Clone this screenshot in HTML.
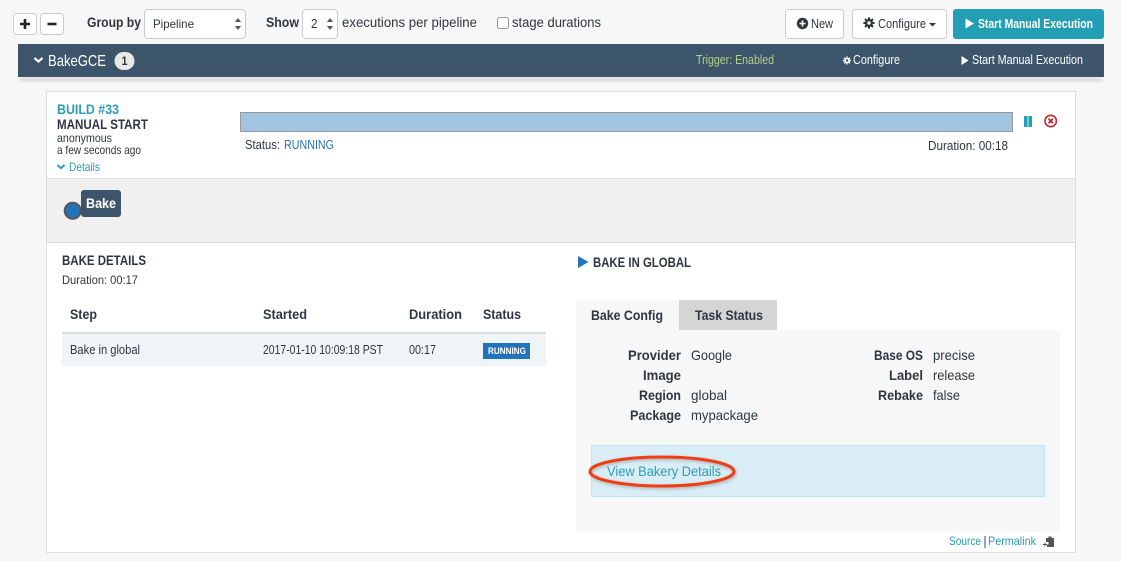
<!DOCTYPE html>
<html><head><meta charset="utf-8"><title>BakeGCE</title>
<style>
html,body{margin:0;padding:0;width:1121px;height:561px;overflow:hidden;background:#f7f7f7}
svg{display:block}
text{font-family:"Liberation Sans",sans-serif;font-size:14px;fill:#2f3640}
.b{font-weight:bold}
.s{font-size:13px}
.xs{font-size:12px}
.l{fill:#2b9cb3}
</style></head><body>
<svg width="1121" height="561" viewBox="0 0 1121 561" xmlns="http://www.w3.org/2000/svg">
<defs>
<filter id="sh" x="-5%" y="-100%" width="110%" height="300%"><feGaussianBlur stdDeviation="1.500"/></filter>
<filter id="es" x="-10%" y="-30%" width="120%" height="170%"><feGaussianBlur stdDeviation="1.500"/></filter>
</defs>
<rect width="1121" height="561" fill="#f7f7f7"/>

<!-- toolbar -->
<rect x="13.500" y="13.500" width="23" height="21" rx="3" fill="#fff" stroke="#ccc"/>
<path d="M25 19v10M20 24h10" stroke="#222" stroke-width="2.600"/>
<rect x="40.500" y="13.500" width="23" height="21" rx="3" fill="#fff" stroke="#ccc"/>
<path d="M47.500 24h9" stroke="#222" stroke-width="2.600"/>
<text x="87" y="27" class="b" textLength="54" lengthAdjust="spacingAndGlyphs">Group by</text>
<rect x="144.500" y="9.500" width="101" height="29" rx="4" fill="#fff" stroke="#ccc"/>
<text x="153" y="28" class="s" style="font-size:12px" textLength="41" lengthAdjust="spacingAndGlyphs">Pipeline</text>
<path d="M238 18l3 4h-6zM238 30l3-4h-6z" fill="#555"/>
<text x="266" y="27" class="b" textLength="33" lengthAdjust="spacingAndGlyphs">Show</text>
<rect x="302.500" y="9.500" width="35" height="29" rx="4" fill="#fff" stroke="#ccc"/>
<text x="311" y="28" class="s" textLength="6.500" lengthAdjust="spacingAndGlyphs">2</text>
<path d="M330 18l3 4h-6zM330 30l3-4h-6z" fill="#555"/>
<text x="342" y="27" textLength="135" lengthAdjust="spacingAndGlyphs">executions per pipeline</text>
<rect x="497.500" y="17.500" width="11" height="11" rx="2" fill="#fff" stroke="#999"/>
<text x="512" y="27" textLength="89" lengthAdjust="spacingAndGlyphs">stage durations</text>

<rect x="785.500" y="9.500" width="58" height="29" rx="3" fill="#fff" stroke="#ccc"/>
<circle cx="802.500" cy="23.500" r="5.700" fill="#2f3640"/>
<path d="M802.500 20.500v6M799.500 23.500h6" stroke="#fff" stroke-width="1.600"/>
<text x="811" y="28" class="s" textLength="22" lengthAdjust="spacingAndGlyphs">New</text>
<rect x="852.500" y="9.500" width="94" height="29" rx="3" fill="#fff" stroke="#ccc"/>
<g transform="translate(869,23)"><path d="M0-5.600V5.600M-5.600 0H5.600M-4-4L4 4M-4 4L4-4" stroke="#2f3640" stroke-width="2"/><circle r="4" fill="#2f3640"/><circle r="1.700" fill="#fff"/></g>
<text x="878" y="28" class="s" textLength="48" lengthAdjust="spacingAndGlyphs">Configure</text>
<path d="M929 23h7l-3.500 3.500z" fill="#2f3640"/>
<rect x="953" y="9" width="151" height="30" rx="3" fill="#229fb5"/>
<path d="M965.500 18.500l8.500 5-8.500 5z" fill="#fff"/>
<text x="978" y="28" class="s b" style="fill:#fff" textLength="115" lengthAdjust="spacingAndGlyphs">Start Manual Execution</text>

<!-- pipeline bar -->
<rect x="20" y="78" width="1082" height="3" fill="#d2d2d2" filter="url(#sh)"/>
<rect x="18" y="44" width="1086" height="33" fill="#3c556b"/>
<path d="M34.500 58l4 3.500 4-3.500" fill="none" stroke="#fff" stroke-width="2.200"/>
<text x="48" y="66" style="fill:#fff;font-size:16px" textLength="58" lengthAdjust="spacingAndGlyphs">BakeGCE</text>
<rect x="114.500" y="52" width="20" height="18" rx="9" fill="#e8e8e8"/>
<text x="121.500" y="65" class="xs b" style="fill:#333" textLength="6" lengthAdjust="spacingAndGlyphs">1</text>
<text x="696" y="64" class="s" style="fill:#b6d18a" textLength="78" lengthAdjust="spacingAndGlyphs">Trigger: Enabled</text>
<g transform="translate(847,60.500)"><path d="M0-4V4M-4 0H4M-2.800-2.800L2.800 2.800M-2.800 2.800L2.800-2.800" stroke="#fff" stroke-width="1.400"/><circle r="2.800" fill="#fff"/><circle r="1.200" fill="#3c556b"/></g>
<text x="853" y="64" class="s" style="fill:#fff" textLength="47" lengthAdjust="spacingAndGlyphs">Configure</text>
<path d="M961.500 56l7 4.500-7 4.500z" fill="#fff"/>
<text x="972" y="64" class="s" style="fill:#fff" textLength="111" lengthAdjust="spacingAndGlyphs">Start Manual Execution</text>

<!-- card -->
<rect x="46.500" y="91.500" width="1029" height="461" fill="#fff" stroke="#ddd"/>
<text x="57" y="114" class="b l" textLength="62" lengthAdjust="spacingAndGlyphs">BUILD #33</text>
<text x="57" y="129" class="b" textLength="91" lengthAdjust="spacingAndGlyphs">MANUAL START</text>
<text x="57" y="142" class="xs" textLength="55" lengthAdjust="spacingAndGlyphs">anonymous</text>
<text x="57" y="154" class="xs" textLength="84" lengthAdjust="spacingAndGlyphs">a few seconds ago</text>
<path d="M57.500 165l3.500 3.200 3.500-3.200" fill="none" stroke="#2b9cb3" stroke-width="2"/>
<text x="69" y="171" class="xs l" textLength="31" lengthAdjust="spacingAndGlyphs">Details</text>

<rect x="240.500" y="112.500" width="772" height="19" fill="#a3c4e0" stroke="#999"/>
<text x="245" y="149" class="s" textLength="35" lengthAdjust="spacingAndGlyphs">Status:</text>
<text x="284" y="149" class="s" style="fill:#2a73b5" textLength="50" lengthAdjust="spacingAndGlyphs">RUNNING</text>
<text x="928" y="150" class="s" textLength="80" lengthAdjust="spacingAndGlyphs">Duration: 00:18</text>
<rect x="1024" y="116" width="3.600" height="11" fill="#229fb5"/>
<rect x="1028.400" y="116" width="3.600" height="11" fill="#229fb5"/>
<circle cx="1050.700" cy="121" r="5.700" fill="none" stroke="#c0282d" stroke-width="1.600"/>
<path d="M1048.500 118.800l4.400 4.400M1052.900 118.800l-4.400 4.400" stroke="#c0282d" stroke-width="1.800"/>

<rect x="47" y="178" width="1028" height="65" fill="#f0f0f0"/>
<path d="M47 178.500H1075M47 242.500H1075" stroke="#ddd"/>
<circle cx="72.700" cy="210.700" r="8" fill="#2273ba" stroke="#555" stroke-width="2"/>
<rect x="81" y="190" width="40" height="27" rx="3" fill="#3c556b"/>
<text x="86" y="208" class="b" style="fill:#fff" textLength="30" lengthAdjust="spacingAndGlyphs">Bake</text>

<!-- left details -->
<text x="62" y="265" class="b" textLength="84" lengthAdjust="spacingAndGlyphs">BAKE DETAILS</text>
<text x="62" y="284" class="xs" textLength="76" lengthAdjust="spacingAndGlyphs">Duration: 00:17</text>
<text x="70" y="319" class="b" textLength="27" lengthAdjust="spacingAndGlyphs">Step</text>
<text x="263" y="319" class="b" textLength="44" lengthAdjust="spacingAndGlyphs">Started</text>
<text x="409" y="319" class="b" textLength="53" lengthAdjust="spacingAndGlyphs">Duration</text>
<text x="483" y="319" class="b" textLength="38" lengthAdjust="spacingAndGlyphs">Status</text>
<rect x="62" y="334" width="484" height="32" fill="#eff4f7"/>
<rect x="62" y="332" width="484" height="2" fill="#ddd"/>
<text x="70" y="354" class="s" textLength="70" lengthAdjust="spacingAndGlyphs">Bake in global</text>
<text x="263" y="354" class="s" textLength="120" lengthAdjust="spacingAndGlyphs">2017-01-10 10:09:18 PST</text>
<text x="409" y="354" class="s" textLength="27" lengthAdjust="spacingAndGlyphs">00:17</text>
<rect x="483" y="343" width="47" height="16" fill="#2273ba"/>
<text x="488" y="354" class="b" style="fill:#fff;font-size:9px" textLength="38" lengthAdjust="spacingAndGlyphs">RUNNING</text>

<!-- right details -->
<path d="M578 256l10.500 6-10.500 6z" fill="#2273ba"/>
<text x="593" y="267" class="b" textLength="98" lengthAdjust="spacingAndGlyphs">BAKE IN GLOBAL</text>
<rect x="576" y="300" width="103" height="30" fill="#f7f7f7"/>
<rect x="679" y="300" width="98" height="30" fill="#d5d5d5"/>
<rect x="576" y="330" width="484" height="202" fill="#f7f7f7"/>
<text x="591" y="320" class="b" textLength="72" lengthAdjust="spacingAndGlyphs">Bake Config</text>
<text x="695" y="320" class="b" textLength="68" lengthAdjust="spacingAndGlyphs">Task Status</text>

<text x="628" y="360" class="b" textLength="53" lengthAdjust="spacingAndGlyphs">Provider</text>
<text x="643" y="380" class="b" textLength="38" lengthAdjust="spacingAndGlyphs">Image</text>
<text x="639" y="400" class="b" textLength="42" lengthAdjust="spacingAndGlyphs">Region</text>
<text x="630" y="420" class="b" textLength="51" lengthAdjust="spacingAndGlyphs">Package</text>
<text x="691" y="360" textLength="41" lengthAdjust="spacingAndGlyphs">Google</text>
<text x="691" y="400" textLength="36" lengthAdjust="spacingAndGlyphs">global</text>
<text x="691" y="420" textLength="67" lengthAdjust="spacingAndGlyphs">mypackage</text>
<text x="874" y="360" class="b" textLength="49" lengthAdjust="spacingAndGlyphs">Base OS</text>
<text x="889" y="380" class="b" textLength="34" lengthAdjust="spacingAndGlyphs">Label</text>
<text x="878" y="400" class="b" textLength="45" lengthAdjust="spacingAndGlyphs">Rebake</text>
<text x="933" y="360" textLength="42" lengthAdjust="spacingAndGlyphs">precise</text>
<text x="933" y="380" textLength="42" lengthAdjust="spacingAndGlyphs">release</text>
<text x="933" y="400" textLength="27" lengthAdjust="spacingAndGlyphs">false</text>

<rect x="591.500" y="445.500" width="453" height="51" fill="#d8edf6" stroke="#bce8f1"/>
<text x="607" y="476" class="l" textLength="114" lengthAdjust="spacingAndGlyphs">View Bakery Details</text>
<ellipse cx="663" cy="473" rx="72" ry="14.500" fill="none" stroke="#555" stroke-opacity=".4" stroke-width="3" filter="url(#es)"/>
<ellipse cx="662" cy="471.500" rx="72" ry="14.500" fill="none" stroke="#f23d12" stroke-width="3"/>

<text x="949" y="545" class="xs l" textLength="32" lengthAdjust="spacingAndGlyphs">Source</text>
<rect x="984.500" y="536" width="1" height="12" fill="#3a4a7a"/>
<text x="988" y="545" class="xs l" textLength="48" lengthAdjust="spacingAndGlyphs">Permalink</text>
<path d="M1046 538h2.500v-1.500h3v1.500h2.500v9h-7v-2.500h1.500v-2.500h-2.500z" fill="#555"/>
<path d="M1043 544.500h4M1045 542.800v3.400" stroke="#555" stroke-width="1"/>
</svg>
</body></html>
